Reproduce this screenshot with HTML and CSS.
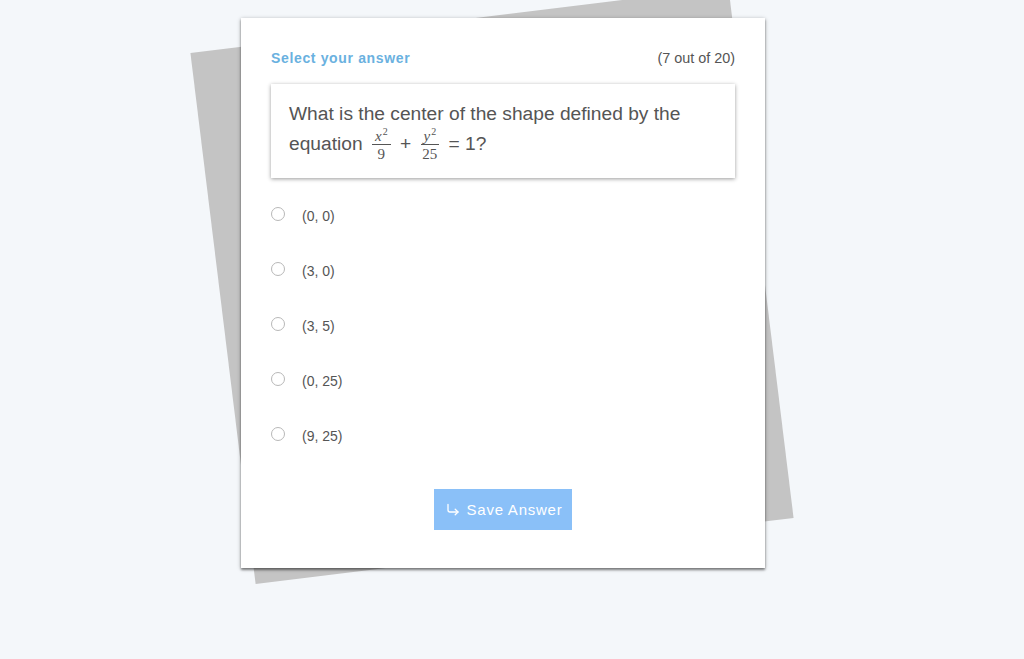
FILE: index.html
```html
<!DOCTYPE html>
<html lang="en">
<head>
    <meta charset="UTF-8">
    <meta name="viewport" content="width=device-width, initial-scale=1.0">
    <title>Quiz</title>
    <link rel="stylesheet" href="styles.css">
</head>
<body>

    <div class="card">
        <div class="card-head">
            <span class="prompt">Select your answer</span>
            <span class="count">(7 out of 20)</span>
        </div>

        <!-- Pregunta -->
        <div class="question">
            What is the center of the shape defined by the equation
            <span class="frac"><span class="num"><i>x</i><sup>2</sup></span><span class="den">9</span></span>
            <span class="op">+</span>
            <span class="frac"><span class="num"><i>y</i><sup>2</sup></span><span class="den">25</span></span>
            <span class="op">= 1?</span>
        </div>

        <!-- Opciones -->
        <ul class="options">
            <li><span class="radio"></span><span class="label">(0, 0)</span></li>
            <li><span class="radio"></span><span class="label">(3, 0)</span></li>
            <li><span class="radio"></span><span class="label">(3, 5)</span></li>
            <li><span class="radio"></span><span class="label">(0, 25)</span></li>
            <li><span class="radio"></span><span class="label">(9, 25)</span></li>
        </ul>

        <div class="actions">
            <button class="save">
                <svg width="14" height="14" viewBox="0 0 14 14" fill="none" stroke="#fff" stroke-width="1.3" stroke-linecap="round" stroke-linejoin="round">
                    <path d="M2 1.5v5.5a2 2 0 0 0 2 2h8"/>
                    <path d="M9.2 6.2l2.8 2.8-2.8 2.8"/>
                </svg>
                Save Answer
            </button>
        </div>
    </div>

</body>
</html>
```

FILE: styles.css
```css
/* General */
html, body {
    min-height: 100%;
}

body {
    margin: 0;
    padding: 18px 0 40px;
    background: #f4f7fa;
    font-family: "Liberation Sans", Arial, sans-serif;
    color: #555;
}

/* Tarjeta */
.card {
    position: relative;
    box-sizing: border-box;
    width: 524px;
    height: 550px;
    margin-left: 241px;
    padding: 30px 30px 0;
    background: white;
    box-shadow: 0 1px 4px rgba(0,0,0,0.35), 0 2px 2px rgba(0,0,0,0.35);
}

/* Hoja gris detrás */
.card::before {
    content: "";
    position: absolute;
    left: -20px;
    top: 0;
    width: 542px;
    height: 535px;
    background: #c4c4c4;
    transform: rotate(-7deg);
    z-index: -1;
}

.card-head {
    display: flex;
    justify-content: space-between;
    font-size: 14px;
    line-height: 20px;
}

.prompt {
    color: #6ab1e0;
    font-weight: bold;
    letter-spacing: 0.65px;
}

.count {
    font-size: 14.4px;
}

.question {
    margin-top: 16px;
    padding: 15px 18px 17px;
    font-size: 19.2px;
    line-height: 30px;
    box-shadow: 0 1px 4px rgba(0,0,0,0.4);
}

.frac {
    display: inline-flex;
    flex-direction: column;
    align-items: center;
    vertical-align: middle;
    margin: 0 4px;
    font-family: "Liberation Serif", "DejaVu Serif", serif;
    font-size: 15px;
    line-height: 14px;
}

.num {
    padding: 0 3px 1px;
    border-bottom: 1px solid #555;
}

.num sup {
    font-size: 10px;
    vertical-align: 6px;
    line-height: 0;
    margin-left: 1px;
}

.den {
    padding-top: 2px;
}

/* Opciones */
.options {
    list-style: none;
    margin: 8px 0 0;
    padding: 0;
}

.options li {
    display: flex;
    align-items: center;
    height: 55px;
    font-size: 14px;
}

.radio {
    box-sizing: border-box;
    width: 14px;
    height: 14px;
    border: 1px solid #b8b8b8;
    border-radius: 50%;
    margin-right: 17px;
}

.label {
    padding-top: 4px;
}

/* Botón */
.actions {
    display: flex;
    justify-content: center;
    margin-top: 28px;
}

.save {
    display: flex;
    align-items: center;
    gap: 7px;
    height: 41px;
    padding: 0 10px 0 12px;
    border: none;
    background: #8ac0f8;
    color: white;
    font-family: "Liberation Sans", Arial, sans-serif;
    font-size: 15px;
    letter-spacing: 0.75px;
    cursor: pointer;
}
```
